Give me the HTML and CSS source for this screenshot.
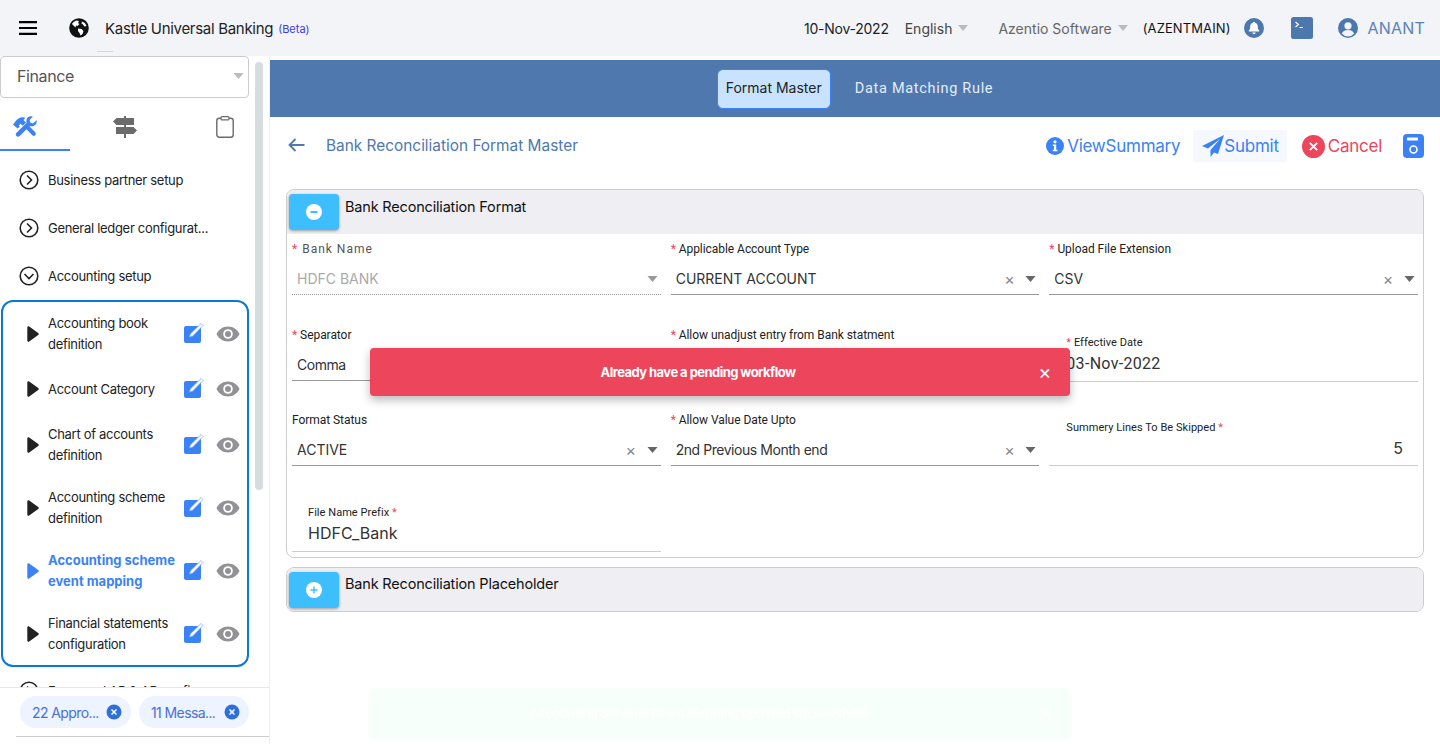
FILE: index.html
```html
<!DOCTYPE html>
<html lang="en">
<head>
  <meta charset="UTF-8" />
  <meta name="viewport" content="width=device-width, initial-scale=1.0" />
  <title>Bank Reconciliation Format Master</title>
  <link rel="stylesheet" href="styles.css">
</head>
<body>

<svg class="sprite" width="0" height="0">
  <symbol id="edit" viewBox="0 0 22 22">
    <rect x="1" y="4" width="17" height="17" rx="2" fill="#3b82f6"/>
    <path d="M6.500 15l.8-3L18 1.500l2 2L9.500 14.200z" fill="#fff" stroke="#6fa3f8" stroke-width=".7"/>
  </symbol>
  <symbol id="eye" viewBox="0 0 24 16">
    <path d="M.5 8C3 3.200 7 .5 12 .5S21 3.200 23.500 8C21 12.800 17 15.500 12 15.500S3 12.800 .5 8z" fill="#929296"/>
    <circle cx="12" cy="8" r="4.800" fill="#fff"/>
    <circle cx="12" cy="8" r="3" fill="#929296"/>
  </symbol>
  <symbol id="play" viewBox="0 0 12 16">
    <path d="M1.500 1.500L10.500 8L1.500 14.500z" stroke-width="2.400" stroke-linejoin="round"/>
  </symbol>
  <symbol id="chev" viewBox="0 0 20 20">
    <circle cx="10" cy="10" r="8.800" fill="none" stroke="#222" stroke-width="1.600"/>
    <path d="M8 5.500l4.500 4.500L8 14.500" fill="none" stroke="#222" stroke-width="1.600"/>
  </symbol>
  <symbol id="chipx" viewBox="0 0 16 16">
    <circle cx="8" cy="8" r="7.500" fill="#2f6fd9"/>
    <path d="M5.500 5.500l5 5m0-5l-5 5" stroke="#fff" stroke-width="1.500"/>
  </symbol>
  <symbol id="caret" viewBox="0 0 10 6">
    <path d="M0 0h10L5 6z"/>
  </symbol>
</svg>

<header class="topbar">
  <svg class="menu-icon" width="18" height="14" viewBox="0 0 18 14"><path d="M0 1.200h18M0 7h18M0 12.800h18" stroke="#000" stroke-width="2.200"/></svg>
  <svg class="globe" width="20" height="20" viewBox="0 0 20 20">
    <circle cx="10" cy="10" r="9.800" fill="#111"/>
    <path d="M4 4.500l3-2 3 .5-1 2 1.500 1-2 2-1.500-.5-.5 2-2-2-1.500-1.500zM9 10.500l3.500.5 2 2-1 3-2 1.500-1-2.500-1.500-2zM13 3.500l3 1.500 1.500 3-2 .5-1.500-2-1.500-1z" fill="#fff"/>
  </svg>
  <span class="brand">Kastle Universal Banking</span>
  <span class="beta">(Beta)</span>
  <span class="tick"></span>

  <div class="topbar-right">
    <span class="date">10-Nov-2022</span>
    <span class="lang">English</span>
    <svg class="top-caret" width="10" height="6"><use href="#caret"/></svg>
    <span class="company">Azentio Software</span>
    <svg class="top-caret" width="10" height="6"><use href="#caret"/></svg>
    <span class="branch">(AZENTMAIN)</span>
    <svg class="bell" width="20" height="20" viewBox="0 0 20 20">
      <circle cx="10" cy="10" r="10" fill="#4c78ad"/>
      <path d="M10 3.800a1 1 0 0 1 1 1c2 .5 2.800 2 2.800 4 0 2.200.7 3 1.400 3.800v.8H4.800v-.8c.7-.8 1.400-1.600 1.400-3.800 0-2 .8-3.500 2.800-4a1 1 0 0 1 1-1zM8.300 14.500h3.400a1.700 1.700 0 0 1-3.400 0z" fill="#fff"/>
    </svg>
    <svg class="terminal" width="22" height="22" viewBox="0 0 22 22">
      <rect width="22" height="22" rx="2.500" fill="#4c78ad"/>
      <path d="M4.500 5l3 2.500-3 2.500M8.500 10.500h3.500" fill="none" stroke="#fff" stroke-width="1.200"/>
    </svg>
    <svg class="user" width="20" height="20" viewBox="0 0 20 20">
      <circle cx="10" cy="10" r="10" fill="#4c78ad"/>
      <circle cx="10" cy="7.800" r="3.600" fill="#f2f4f8"/>
      <path d="M3.800 15.500c1-2.500 3.500-3.500 6.200-3.500s5.200 1 6.200 3.500A8 8 0 0 1 10 18.400a8 8 0 0 1-6.200-2.900z" fill="#f2f4f8"/>
    </svg>
    <span class="username">ANANT</span>
  </div>
</header>

<div class="layout">
  <aside class="sidebar">
    <div class="side-scroll">
      <div class="module-select">
        <span>Finance</span>
        <svg width="11" height="6"><use href="#caret"/></svg>
      </div>

      <div class="tabs">
        <div class="tab active">
          <svg width="24" height="21" viewBox="0 0 24 21">
            <path d="M0 8.500L3 4.800C5.500 1.500 9 .3 12.500 1.800L10.500 4l2.500 2.500-3.200 3.300-2.300-2-1.700 1.700 1 1-2.200 2z" fill="#3b82f6"/>
            <path d="M23.700 4.200l-3.700 3.300-2.700-.7-.7-2.700L19.800.6c-2.800-1-6 .6-6.400 3.500-.2 1 0 1.900.3 2.600L3.500 16.800c-1 1-1 2.400 0 3.300.9.900 2.300.9 3.200 0L16.800 10c3.300 1.200 7.700-1.300 6.900-5.800z" fill="#3b82f6"/>
            <path d="M12.500 12.200l2.900-2.900 6.800 7c.8.900.8 2.200 0 3-.8.800-2.100.8-2.900 0z" fill="#3b82f6"/>
          </svg>
        </div>
        <div class="tab">
          <svg width="24" height="22" viewBox="0 0 24 22">
            <path d="M11 0h2v2h8v7H3.500L0 5.500 3.500 2H11zM3 11h17.500l3.500 3.500-3.500 3.500H13v4h-2v-4H3z" fill="#6b6b6b"/>
            <path d="M11 9h2v2h-2z" fill="#6b6b6b"/>
          </svg>
        </div>
        <div class="tab">
          <svg width="18" height="22" viewBox="0 0 18 22">
            <rect x=".8" y="2.200" width="16.400" height="19" rx="2.500" fill="none" stroke="#6b6b6b" stroke-width="1.400"/>
            <rect x="5" y=".7" width="8" height="3.200" rx="1" fill="#fff" stroke="#6b6b6b" stroke-width="1.200"/>
          </svg>
        </div>
      </div>

      <ul class="tree">
        <li class="tree-group"><svg width="20" height="20"><use href="#chev"/></svg>Business partner setup</li>
        <li class="tree-group"><svg width="20" height="20"><use href="#chev"/></svg>General ledger configurat...</li>
        <li class="tree-group"><svg class="open" width="20" height="20"><use href="#chev"/></svg>Accounting setup</li>
      </ul>

      <ul class="subtree">
        <li class="sub-item two"><svg class="play" width="12" height="16"><use href="#play"/></svg><span class="sub-name">Accounting book definition</span><svg class="edit" width="22" height="22"><use href="#edit"/></svg><svg class="eye" width="24" height="16"><use href="#eye"/></svg></li>
        <li class="sub-item"><svg class="play" width="12" height="16"><use href="#play"/></svg><span class="sub-name">Account Category</span><svg class="edit" width="22" height="22"><use href="#edit"/></svg><svg class="eye" width="24" height="16"><use href="#eye"/></svg></li>
        <li class="sub-item two"><svg class="play" width="12" height="16"><use href="#play"/></svg><span class="sub-name">Chart of accounts definition</span><svg class="edit" width="22" height="22"><use href="#edit"/></svg><svg class="eye" width="24" height="16"><use href="#eye"/></svg></li>
        <li class="sub-item two"><svg class="play" width="12" height="16"><use href="#play"/></svg><span class="sub-name">Accounting scheme definition</span><svg class="edit" width="22" height="22"><use href="#edit"/></svg><svg class="eye" width="24" height="16"><use href="#eye"/></svg></li>
        <li class="sub-item two current"><svg class="play" width="12" height="16"><use href="#play"/></svg><span class="sub-name">Accounting scheme event mapping</span><svg class="edit" width="22" height="22"><use href="#edit"/></svg><svg class="eye" width="24" height="16"><use href="#eye"/></svg></li>
        <li class="sub-item two"><svg class="play" width="12" height="16"><use href="#play"/></svg><span class="sub-name">Financial statements configuration</span><svg class="edit" width="22" height="22"><use href="#edit"/></svg><svg class="eye" width="24" height="16"><use href="#eye"/></svg></li>
      </ul>

      <ul class="tree tree-last">
        <li class="tree-group"><svg width="20" height="20"><use href="#chev"/></svg>Forex and AP &amp; AR confi...</li>
      </ul>
    </div>
    <div class="scrollbar"><div class="scroll-thumb"></div></div>

    <div class="side-footer">
      <div class="chips">
        <span class="chip">22 Appro...<svg width="16" height="16"><use href="#chipx"/></svg></span>
        <span class="chip">11 Messa...<svg width="16" height="16"><use href="#chipx"/></svg></span>
      </div>
    </div>
  </aside>

  <main class="content">
    <nav class="banner">
      <span class="banner-tab active">Format Master</span>
      <span class="banner-tab">Data Matching Rule</span>
    </nav>

    <div class="toolbar">
      <svg class="back" width="17" height="14" viewBox="0 0 17 14"><path d="M16.500 7H1.500M7.500 1L1.500 7l6 6" fill="none" stroke="#4e78ae" stroke-width="1.800"/></svg>
      <h2 class="page-title">Bank Reconciliation Format Master</h2>
      <div class="actions">
        <span class="action">
          <svg width="18" height="18" viewBox="0 0 18 18"><circle cx="9" cy="9" r="9" fill="#3b82f6"/><circle cx="9" cy="4.800" r="1.600" fill="#fff"/><path d="M6.800 7.500h3.400v5.200h1.300v1.500H6.800v-1.500h1.200V9H6.800z" fill="#fff"/></svg>
          ViewSummary
        </span>
        <span class="action submit">
          <svg width="22" height="22" viewBox="0 0 22 22"><path d="M22 0L0 11l6 2.500L18 4 8.500 15v7l3.500-4.500 4 1.500z" fill="#3b82f6"/></svg>
          Submit
        </span>
        <span class="action cancel">
          <svg width="23" height="23" viewBox="0 0 23 23"><circle cx="11.500" cy="11.500" r="11.500" fill="#ed455c"/><path d="M7.800 7.800l7.400 7.400m0-7.400l-7.400 7.400" stroke="#fff" stroke-width="1.800"/></svg>
          Cancel
        </span>
        <svg class="save" width="21" height="24" viewBox="0 0 21 24"><rect width="21" height="24" rx="4" fill="#3b82f6"/><rect x="4" y="3.500" width="11" height="3" rx=".5" fill="#fff"/><circle cx="10.500" cy="15.500" r="3.500" fill="none" stroke="#fff" stroke-width="1.600"/></svg>
      </div>
    </div>

    <section class="panel">
      <div class="panel-head">
        <span class="toggle"><svg width="16" height="16" viewBox="0 0 16 16"><circle cx="8" cy="8" r="8" fill="#fff"/><path d="M4.500 8h7" stroke="#3dbfff" stroke-width="2"/></svg></span>
        <span class="panel-title">Bank Reconciliation Format</span>
      </div>
      <div class="form-grid">
        <div class="field">
          <label class="muted"><i>*</i> Bank Name</label>
          <div class="control disabled"><span class="value caps">HDFC BANK</span><svg class="arrow" width="11" height="6"><use href="#caret"/></svg></div>
        </div>
        <div class="field">
          <label><i>*</i> Applicable Account Type</label>
          <div class="control"><span class="value caps">CURRENT ACCOUNT</span><span class="clear">×</span><svg class="arrow" width="11" height="6"><use href="#caret"/></svg></div>
        </div>
        <div class="field">
          <label><i>*</i> Upload File Extension</label>
          <div class="control"><span class="value caps">CSV</span><span class="clear">×</span><svg class="arrow" width="11" height="6"><use href="#caret"/></svg></div>
        </div>

        <div class="field">
          <label><i>*</i> Separator</label>
          <div class="control"><span class="value">Comma</span></div>
        </div>
        <div class="field">
          <label><i>*</i> Allow unadjust entry from Bank statment</label>
          <div class="control"></div>
        </div>
        <div class="field input-field date-field">
          <label><i>*</i> Effective Date</label>
          <div class="control"><span class="value">03-Nov-2022</span></div>
        </div>

        <div class="field">
          <label>Format Status</label>
          <div class="control"><span class="value caps">ACTIVE</span><span class="clear">×</span><svg class="arrow" width="11" height="6"><use href="#caret"/></svg></div>
        </div>
        <div class="field">
          <label><i>*</i> Allow Value Date Upto</label>
          <div class="control"><span class="value">2nd Previous Month end</span><span class="clear">×</span><svg class="arrow" width="11" height="6"><use href="#caret"/></svg></div>
        </div>
        <div class="field input-field">
          <label>Summery Lines To Be Skipped <i>*</i></label>
          <div class="control number"><span class="value">5</span></div>
        </div>

        <div class="field input-field prefix">
          <label>File Name Prefix <i>*</i></label>
          <div class="control"><span class="value">HDFC_Bank</span></div>
        </div>
      </div>
    </section>

    <section class="panel closed">
      <div class="panel-head">
        <span class="toggle"><svg width="16" height="16" viewBox="0 0 16 16"><circle cx="8" cy="8" r="8" fill="#fff"/><path d="M4.500 8h7M8 4.500v7" stroke="#3dbfff" stroke-width="1.400"/></svg></span>
        <span class="panel-title">Bank Reconciliation Placeholder</span>
      </div>
    </section>
  </main>
</div>

<div class="toast toast-error">
  <span class="toast-msg">Already have a pending workflow</span>
  <span class="toast-close">×</span>
</div>
<div class="toast toast-success">
  <span class="toast-msg">Accounting Scheme Event Mapping updated successfully</span>
  <span class="toast-close">×</span>
</div>

</body>
</html>
```

FILE: styles.css
```css
* { box-sizing: border-box; }
html, body { margin: 0; height: 744px; overflow: hidden; }
body { font-family: Inter, "Liberation Sans", sans-serif; background: #fff; color: #222; }
ul { list-style: none; margin: 0; padding: 0; }
.sprite { display: block; height: 0; }

/* top bar */
.topbar { display: flex; align-items: center; height: 56px; background: #f2f4f8; padding: 0 15px 0 19px; position: relative; }
.globe { margin-left: 32px; }
.brand { margin-left: 16px; font-size: 15px; letter-spacing: -.3px; color: #222; }
.beta { margin-left: 5px; margin-top: 2px; font-size: 11px; color: #3a3af0; }
.tick { position: absolute; left: 97px; top: 51px; width: 16px; height: 1px; background: #d5d7dc; }
.topbar-right { margin-left: auto; display: flex; align-items: center; }
.date { font-size: 14px; letter-spacing: -.25px; color: #222; }
.lang { margin-left: 16px; font-size: 14px; color: #444; }
.top-caret { margin-left: 6px; fill: #bbb; }
.company { margin-left: 30px; font-size: 14px; color: #666; }
.branch { margin-left: 15px; font-size: 13px; letter-spacing: .1px; color: #111; }
.bell { margin-left: 14px; }
.terminal { margin-left: 27px; margin-top: -1px; }
.user { margin-left: 25px; }
.username { margin-left: 9px; font-size: 16px; color: #5a82b5; letter-spacing: .2px; }

.layout { display: flex; height: 688px; }

/* sidebar */
.sidebar { width: 270px; flex: none; position: relative; border-right: 1px solid #eee; overflow: hidden; }
.side-scroll { width: 249px; }
.module-select { height: 42px; border: 1px solid #ccc; border-radius: 4px; display: flex; align-items: center; justify-content: space-between; padding: 0 4px 2px 16px; font-size: 16px; letter-spacing: -.4px; color: #555; fill: #bbb; }
.tabs { display: flex; height: 53px; }
.tab { width: 70px; display: flex; align-items: flex-start; justify-content: center; padding-top: 18px; }
.tab:nth-child(2) { width: 110px; }
.tab:nth-child(3) { width: 69px; padding-left: 20px; }
.tab.active { border-bottom: 2px solid #3b82f6; justify-content: flex-start; padding-left: 13px; }
.tree { padding: 5px 0 0 19px; }
.tree-group { height: 48px; display: flex; align-items: center; gap: 9px; font-size: 13px; letter-spacing: -.3px; color: #222; white-space: nowrap; }
.tree-group svg.open { transform: rotate(90deg); }
.subtree { margin: 0 0 0 1px; width: 248px; border: 2px solid #0a7ad1; border-radius: 12px; }
.sub-item { display: flex; align-items: center; height: 48px; padding-left: 24px; font-size: 13px; line-height: 21px; letter-spacing: -.3px; color: #222; }
.sub-item.two { height: 63px; }
.play { flex: none; fill: #222; stroke: #222; }
.sub-name { width: 130px; margin-left: 9px; }
.edit { flex: none; margin-left: 5px; margin-top: -2px; }
.eye { flex: none; margin-left: 11px; }
.current { font-weight: 700; letter-spacing: 0; color: #3b82f6; }
.current .play { fill: #3b82f6; stroke: #3b82f6; }
.tree-last { padding-top: 0; }

.scrollbar { position: absolute; left: 255px; top: 6px; width: 8px; height: 681px; }
.scroll-thumb { height: 428px; border-radius: 4px; background: #d5dde0; }

.side-footer { position: absolute; left: 0; right: 0; top: 631px; height: 57px; background: #fff; border-top: 1px solid #e8e8e8; }
.chips { display: flex; gap: 8px; padding-left: 20px; padding-top: 8px; height: 48px; }
.chip { height: 32px; width: 111px; border-radius: 16px; background: #edf3ff; color: #4a6fd6; font-size: 14px; letter-spacing: -.6px; display: flex; align-items: center; justify-content: space-between; padding: 0 9px 0 12px; white-space: nowrap; }
.chip + .chip { width: 110px; }
.side-footer::after { content: ""; display: block; margin-left: 16px; border-top: 1px solid #ccc; }

/* main */
.content { flex: 1; min-width: 0; padding-top: 4px; }
.banner { height: 57px; background: #4e78ae; display: flex; align-items: center; justify-content: center; gap: 24px; }
.banner-tab { font-family: Roboto, sans-serif; font-size: 14.5px; letter-spacing: .7px; color: #e4eef9; }
.banner-tab.active { font-family: Inter, sans-serif; font-size: 14px; letter-spacing: 0; color: #222; height: 40px; padding: 0 8px 2px; display: flex; align-items: center; background: #c9e2ff; border: 1px solid #3b82f6; border-radius: 6px; }

.toolbar { height: 57px; padding: 1px 16px 0 18px; display: flex; align-items: center; }
.back { margin-top: -2px; }
.page-title { margin: 0 0 2px 21px; font-size: 15.400px; font-weight: 400; color: #4e78ae; }
.actions { margin-left: auto; display: flex; align-items: center; }
.action { display: flex; align-items: center; gap: 3px; font-size: 17px; letter-spacing: -.25px; color: #3b82f6; height: 32px; }
.submit { margin-left: 13px; background: #f5f9ff; padding: 0 8px 0 9px; gap: 0; }
.cancel { margin-left: 15px; color: #ed455c; }
.save { margin-left: 21px; }

.panel { margin: 15px 16px 0; border: 1px solid #ccc; border-radius: 8px; padding-bottom: 5px; overflow: hidden; }
.panel.closed { margin-top: 9px; padding-bottom: 0; }
.panel-head { height: 44px; background: #eeeef3; display: flex; padding: 4px 2px 0; }
.closed .panel-head { height: 43px; }
.toggle { width: 50px; height: 36px; border-radius: 4px; background: #3dbfff; box-shadow: 0 1px 3px rgba(0,0,0,.35); display: flex; align-items: center; justify-content: center; }
.panel-title { margin: 1px 0 0 6px; font-size: 14.5px; line-height: 24px; letter-spacing: -.18px; color: #111; }
.closed .panel-title { margin-top: 0; }

.form-grid { display: grid; grid-template-columns: repeat(3, 1fr); grid-template-rows: 61px 60px 61px auto; column-gap: 10px; row-gap: 25px; padding: 0 5px; font-family: Roboto, sans-serif; }
.field { display: flex; flex-direction: column; padding-top: 7px; }
.field label { height: 16px; font-size: 12px; line-height: 16px; letter-spacing: -.05px; color: #222; }
.field label i { font-style: normal; color: #ed455c; }
.field label.muted { letter-spacing: 1px; color: #555; }
.control { height: 38px; flex: none; border-bottom: 1px solid #999; display: flex; align-items: center; padding: 6px 3px 0 5px; font-family: Inter, sans-serif; font-size: 14px; letter-spacing: -.45px; color: #333; }
.control .value { flex: 1; }
.control .caps { letter-spacing: 0; }
.clear { font-size: 16px; color: #888; margin-right: 11px; line-height: 14px; }
.arrow { fill: #666; }
.disabled { border-bottom: 1px dotted #999; color: #aaa; }
.disabled .arrow { fill: #999; }

.input-field { padding-top: 15px; }
.input-field label { padding-left: 17px; font-size: 11px; letter-spacing: .05px; }
.input-field .control { height: 30px; border-bottom-color: #ccc; font-size: 16px; letter-spacing: 0; padding: 0 15px 6px 17px; }
.date-field .control { height: 31px; padding-bottom: 5px; font-family: Roboto, sans-serif; letter-spacing: .3px; }
.number { text-align: right; }
.prefix { padding-top: 14px; }
.prefix label { padding-left: 16px; }
.prefix .control { height: 31px; padding: 0 16px 7px 16px; }

/* toasts */
.toast { position: absolute; left: 370px; width: 700px; height: 48px; padding-right: 44px; border-radius: 4px; display: flex; align-items: center; justify-content: center; color: #fff; font-size: 13px; font-weight: 700; letter-spacing: -.55px; }
.toast-close { position: absolute; right: 19px; font-size: 20px; font-weight: 400; }
.toast-error { top: 348px; background: #ed455c; box-shadow: 0 4px 10px rgba(0,0,0,.28); }
.toast-success { top: 688px; height: 50px; background: #f7fffb; box-shadow: 0 1px 4px rgba(0,0,0,.02); }
```
